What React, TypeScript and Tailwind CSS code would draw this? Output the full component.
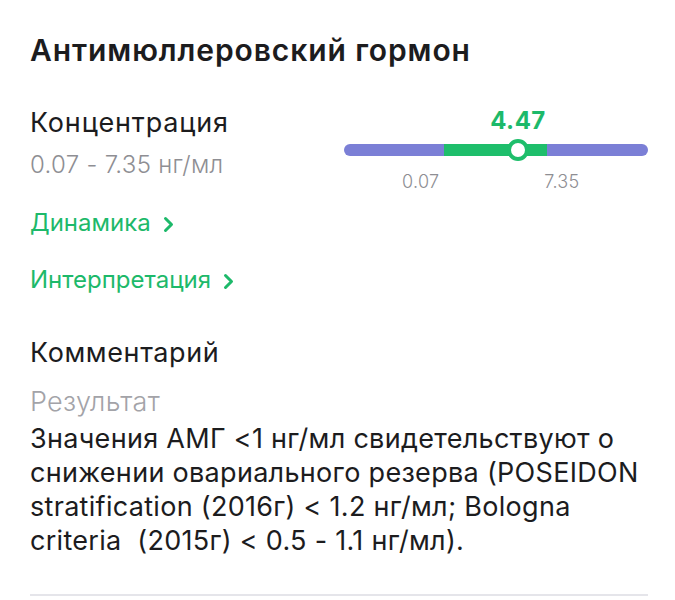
const Chevron = () => (
  <svg width="11" height="17" viewBox="0 0 11 17" fill="none" className="ml-[12px] mt-[3px]">
    <path d="M2.5 2.5L8.5 8.5l-6 6" stroke="#1db96a" strokeWidth="3" strokeLinecap="round" strokeLinejoin="round" />
  </svg>
);

const RangeBar = () => {
  return (
    <div className="w-[304px]">
      <div className="relative h-[24px]">
        <div className="absolute left-[174px] top-0 -translate-x-1/2 text-[24px] font-bold leading-none text-[#1db96a] tracking-[0.5px]">
          4.47
        </div>
      </div>
      <div className="relative mt-[11px] h-[12px]">
        <div className="flex h-full overflow-hidden rounded-full">
          <div className="w-[100px] bg-[#7b7fd6]" />
          <div className="w-[103px] bg-[#1ebe6b]" />
          <div className="flex-1 bg-[#7b7fd6]" />
        </div>
        <div className="absolute left-[163px] top-[-5px] h-[22px] w-[22px] rounded-full border-[4px] border-[#1ebe6b] bg-white" />
      </div>
      <div className="mt-[17px] flex text-[18px] font-light leading-none text-[#8e8e93] tracking-[0.3px]">
        <span className="ml-[58px]">0.07</span>
        <span className="ml-[105px]">7.35</span>
      </div>
    </div>
  );
};

export default function App() {
  return (
    <div className="h-[600px] w-[675px] overflow-hidden bg-white pl-[30px] pr-[27px] pt-[35px] font-['Inter','Noto_Sans',sans-serif] text-[#1c1c1e]">
      <h1 className="text-[30px] font-semibold leading-[30px] tracking-[0.9px]">Антимюллеровский гормон</h1>

      <div className="mt-[44px] flex justify-between">
        <div>
          <div className="text-[27px] leading-none tracking-[0.8px]">Концентрация</div>
          <div className="mt-[17px] text-[24px] font-light leading-none tracking-[0.3px] text-[#8e8e93]">0.07 - 7.35 нг/мл</div>
        </div>
        <RangeBar />
      </div>

      <div className="mt-[20px] flex items-center text-[24px] leading-none text-[#1db96a]">
        Динамика
        <Chevron />
      </div>
      <div className="mt-[33px] flex items-center text-[24px] leading-none text-[#1db96a]">
        Интерпретация
        <Chevron />
      </div>

      <div className="mt-[47px] text-[27px] leading-none tracking-[0.6px]">Комментарий</div>
      <div className="mt-[22px] text-[27px] font-light leading-none tracking-[0.3px] text-[#a3a3a8]">Результат</div>
      <p className="mt-[7px] text-[27px] leading-[34px] tracking-[0.3px]">
        Значения АМГ &lt;1 нг/мл свидетельствуют о снижении овариального резерва (POSEIDON stratification (2016г) &lt; 1.2 нг/мл; Bologna criteria&nbsp; (2015г) &lt; 0.5 - 1.1 нг/мл).
      </p>

      <div className="mt-[36px] h-[2px] bg-[#e5e5ea]" />
    </div>
  );
}
